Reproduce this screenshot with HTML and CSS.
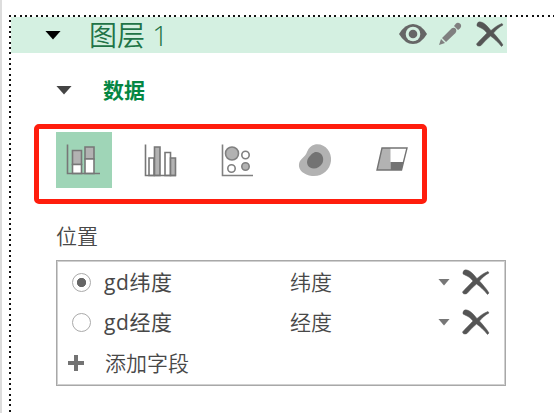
FILE: index.html
```html
<!DOCTYPE html>
<html lang="zh-CN">
<head>
<meta charset="utf-8">
<title>图层</title>
<link rel="stylesheet" href="styles.css">
</head>
<body>
<svg class="defs" width="0" height="0"><defs>
<symbol id="cross" viewBox="0 0 28 26"><path d="M1 3Q2 0 5 1C9 2 12 6 15 9.500C19 6 22 4 26 2.500L27 4C23 6 20 9 17.500 12C21 16 24 19 27 24L25.500 25.500C22 21 18 17.500 14.500 15C11 18 8 21 5 24.500Q1 26 0.500 23C4 19 8 15 11 12C8 8 5 7 1 5Z" fill="#555" stroke="#555" stroke-width=".5"/></symbol>
</defs></svg>
<main class="panel">
  <header class="layer">
    <i class="tri black"></i>
    <h1>图层 1</h1>
    <svg class="eye" viewBox="0 0 28 20"><path d="M0 10Q6 0 14 0T28 10Q22 20 14 20T0 10Z" fill="#666"/><circle cx="14" cy="10" r="7.300" fill="#d4f0e1"/><circle cx="14" cy="10" r="4.300" fill="#666"/></svg>
    <svg class="pencil" viewBox="0 0 24 24"><path d="M1 23L3 17L7 21ZM4 16L13.500 6.500Q16 5 18 7Q19 9 17.500 11L8 20ZM16 4L18 1.500Q20 0 22.500 2Q24 4 22 6.500L20 8Z" fill="#808080"/></svg>
    <svg class="cross"><use href="#cross"/></svg>
  </header>
  <section class="data"><i class="tri"></i><h2>数据</h2></section>
  <nav class="types">
    <button class="active"><svg viewBox="0 0 56 56"><g fill="#b2b2b2" stroke="#777" stroke-width="1.600"><path d="M16.500 18.500h9v14h-9zM29 15h9v12h-9z"/><path fill="#fff" d="M16.500 32.500h9v9h-9zM29 27h9v14.500h-9z"/><path fill="none" d="M11.500 12.500V41.500H44"/></g></svg></button>
    <button><svg viewBox="0 0 56 56"><g fill="#fff" stroke="#777" stroke-width="1.600"><path d="M16 26h5v17.500h-5zM32 20.500h5.500v23H32z"/><path fill="#b2b2b2" d="M21.500 15h5.500v28.500h-5.500zM37.500 26h5v17.500h-5z"/><path fill="none" d="M12.500 12.500V43.500H43"/></g></svg></button>
    <button><svg viewBox="0 0 56 56"><g fill="#fff" stroke="#808080" stroke-width="1.600"><path fill="none" d="M12.500 12.500V43.500H43"/><circle cx="22" cy="21.500" r="6.500" fill="#b2b2b2"/><circle cx="35.500" cy="23" r="3.700"/><circle cx="21.500" cy="36.500" r="3.700"/><circle cx="35.500" cy="34.500" r="3.700" fill="#b2b2b2"/></g></svg></button>
    <button><svg viewBox="0 0 56 56"><path d="M28 12.500C38 11 45 20 44 29C43 38 35 45 25 44C17 43 11 38 12 32C13 26 18 26 20 20Q22 14 28 12.500Z" fill="#b2b2b2"/><path d="M28 20C34 19 38 25 35.500 31C33 36 27 38 23 35.500C19 33 19.500 28 22 25Q25 21 28 20Z" fill="#737373"/></svg></button>
    <button><svg viewBox="0 0 56 56"><path d="M18 16H43L37.500 38H13Z" fill="#fff"/><path d="M18 16H26.500V38H13Z" fill="#b2b2b2"/><path d="M26.500 30H39.500L37.500 38H26.500Z" fill="#737373"/><path d="M18 16H43L37.500 38H13Z" fill="none" stroke="#737373" stroke-width="1.400"/></svg></button>
  </nav>
  <h3>位置</h3>
  <section class="fields">
    <div class="row"><i class="radio on"></i><span class="name latin">gd纬度</span><span class="kind">纬度</span><i class="tri small"></i><svg class="cross"><use href="#cross"/></svg></div>
    <div class="row"><i class="radio"></i><span class="name latin">gd经度</span><span class="kind">经度</span><i class="tri small"></i><svg class="cross"><use href="#cross"/></svg></div>
    <div class="row add"><i class="plus"></i><span class="name">添加字段</span></div>
  </section>
</main>
</body>
</html>
```
FILE: styles.css
```css
* { box-sizing: border-box; }
body { margin: 0; height: 413px; overflow: hidden; background: #fff; border-left: 2px solid #ddd; padding: 15px 0 0 7px; font-family: "Open Sans", "Noto Sans CJK SC", sans-serif; color: #484848; }
.defs { display: none; }
svg { display: block; flex: none; }
h1, h2, h3 { margin: 0; font-weight: 400; white-space: nowrap; }
.panel { height: 398px; padding: 2px 0 0 2px;
  background: repeating-linear-gradient(90deg, #111 0 2px, transparent 2px 5.333px) 0 0 / 100% 2px no-repeat, repeating-linear-gradient(180deg, #111 0 2px, transparent 2px 5.333px) 0 0 / 2px 100% no-repeat; }
.layer { display: flex; align-items: center; width: 496px; height: 36px; padding-left: 34px; background: #d4f0e1; }
.tri { flex: none; width: 16px; height: 9px; background: #444; clip-path: polygon(0 0, 100% 0, 50% 100%); }
.black { background: #000; }
.layer h1 { width: 310px; margin-left: 28px; font: 350 28px/36px "Open Sans", "Noto Sans CJK SC", sans-serif; color: #217346; }
.eye { width: 28px; height: 20px; margin-top: -2px; }
.pencil { width: 24px; height: 24px; margin: -2px 0 0 11px; }
.cross { width: 28px; height: 26px; }
.layer .cross { margin: -2px 0 0 14px; }
.data { display: flex; align-items: center; height: 71px; padding: 3px 0 0 45px; }
.data h2 { margin-left: 31px; font-size: 21px; font-weight: 700; line-height: 30px; color: #058743; }
.types { display: flex; gap: 21px; width: 393px; height: 80px; margin-left: 23px; padding: 3px 0 0 17px; border: 5px solid #ff1d0d; border-radius: 5px; }
.types button { width: 56px; height: 56px; padding: 0; border: 0; background: none; }
.types .active { background: #9fd5b7; }
h3 { height: 56px; padding: 17px 0 0 45px; font-size: 21px; line-height: 30px; font-weight: 350; }
.fields { width: 450px; height: 126px; margin-left: 45px; border: 1px solid #a8a8a8; box-shadow: inset 0 0 0 1px #d0d0d0; padding: 1px; }
.row { display: flex; align-items: center; height: 40px; padding-left: 14px; }
.radio { flex: none; width: 19px; height: 19px; border: 1.500px solid #aaa; border-radius: 50%; }
.on { background: radial-gradient(circle, #666 4.300px, transparent 5px); }
.name { flex: none; width: 174px; margin-left: 13px; }
.name, .kind { font-size: 21px; line-height: 30px; font-weight: 350; white-space: nowrap; }
.name.latin { font-weight: 400; letter-spacing: .6px; font-weight: 380; }
.kind { flex: none; width: 148px; margin-left: 12px; }
.small { width: 12px; height: 7px; background: #777; }
.row .cross { margin-left: 12px; }
.plus { flex: none; width: 16px; height: 16px; margin-left: -4px; background: linear-gradient(#737373, #737373) center / 16px 4px no-repeat, linear-gradient(#737373, #737373) center / 4px 16px no-repeat; }
.add { padding-top: 2px; }
.add .name { margin-left: 21px; }
```
